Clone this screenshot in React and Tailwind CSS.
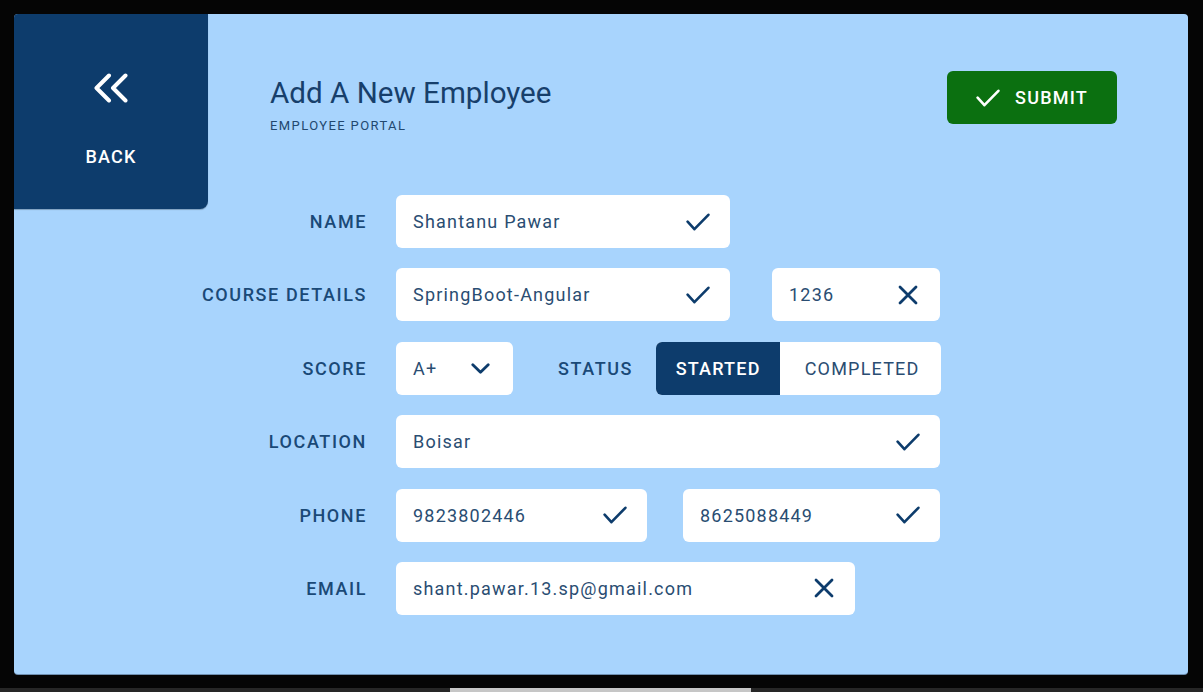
import React from 'react';

// Small inline icons, drawn to match the reference strokes
const CheckIcon = ({ className = '' }) => (
    <svg width="24" height="18" viewBox="0 0 24 18" fill="none" stroke="currentColor" strokeWidth="2.6" strokeLinecap="round" strokeLinejoin="round" className={className}>
        <path d="M1.6 8.6 8.4 16.2 22.4 1.8" />
    </svg>
);

const CrossIcon = ({ className = '' }) => (
    <svg width="20" height="20" viewBox="0 0 20 20" fill="none" stroke="currentColor" strokeWidth="2.8" strokeLinecap="round" className={className}>
        <path d="M2 2 18 18M18 2 2 18" />
    </svg>
);

const ChevronDown = () => (
    <svg width="19" height="11" viewBox="0 0 19 11" fill="none" stroke="currentColor" strokeWidth="2.8" strokeLinecap="round" strokeLinejoin="round">
        <path d="M1.8 1.8 9.5 9.2 17.2 1.8" />
    </svg>
);

const ChevronsLeft = () => (
    <svg width="36" height="30" viewBox="0 0 36 30" fill="none" stroke="currentColor" strokeWidth="4" strokeLinecap="round" strokeLinejoin="round">
        <path d="M16 2.5 3.5 15 16 27.5" />
        <path d="M32.5 2.5 20 15 32.5 27.5" />
    </svg>
);

const Label = ({ children }) => (
    <div className="w-[382px] shrink-0 pr-[29px] text-right text-[18px] font-medium tracking-[1.6px] text-[#1a4977]">
        {children}
    </div>
);

const Field = ({ value, icon, width, pr = 'pr-[20px]' }) => (
    <div className={`${width} ${pr} h-[53px] shrink-0 bg-white rounded-[6px] flex items-center justify-between pl-[17px] text-[18px] tracking-[1.2px] text-[#2a4d72]`}>
        <span>{value}</span>
        <span className="text-[#0d3c6c] flex items-center">
            {icon === 'check' ? <CheckIcon /> : <CrossIcon />}
        </span>
    </div>
);

const App = () => {
    return (
        <div className="w-[1203px] h-[692px] bg-[#050505] flex flex-col overflow-hidden font-['Roboto','Noto_Sans',sans-serif]">
            <div className="mt-[14px] ml-[14px] w-[1174px] h-[660px] bg-[#a8d4fd] rounded-[4px] shadow-[0_1px_0_#6f8fb0] flex flex-col">
                {/* Header */}
                <div className="h-[181px] flex items-start shrink-0">
                    <button className="w-[194px] h-[195px] shrink-0 bg-[#0d3c6c] rounded-tl-[4px] rounded-br-[8px] shadow-[0_1px_1px_rgba(0,0,0,0.25)] flex flex-col items-center pt-[59px] text-white">
                        <ChevronsLeft />
                        <span className="mt-[43px] text-[18px] leading-[22px] font-medium tracking-[1.2px]">BACK</span>
                    </button>

                    <div className="flex-1 pl-[62px] pt-[62px]">
                        <h1 className="text-[29.6px] leading-[34px] text-[#173f6b]">Add A New Employee</h1>
                        <p className="mt-[8px] text-[13px] leading-[16px] tracking-[1.4px] text-[#22486f]">EMPLOYEE PORTAL</p>
                    </div>

                    <button className="mt-[57px] mr-[71px] w-[170px] h-[53px] bg-[#0b7010] rounded-[6px] flex items-center justify-center gap-[15px] text-white">
                        <CheckIcon />
                        <span className="text-[18px] font-medium tracking-[1.2px]">SUBMIT</span>
                    </button>
                </div>

                {/* Form */}
                <div className="flex flex-col gap-y-[20.4px]">
                    <div className="flex items-center h-[53px]">
                        <Label>NAME</Label>
                        <Field width="w-[334px]" value="Shantanu Pawar" icon="check" />
                    </div>

                    <div className="flex items-center h-[53px]">
                        <Label>COURSE DETAILS</Label>
                        <Field width="w-[334px]" value="SpringBoot-Angular" icon="check" />
                        <div className="ml-[42px]">
                            <Field width="w-[168px]" pr="pr-[22px]" value="1236" icon="cross" />
                        </div>
                    </div>

                    <div className="flex items-center h-[53px]">
                        <Label>SCORE</Label>
                        <div className="w-[117px] h-[53px] bg-white rounded-[6px] flex items-center justify-between pl-[17px] pr-[23px] text-[18px] tracking-[1.2px] text-[#2a4d72]">
                            <span>A+</span>
                            <span className="text-[#0d3c6c]"><ChevronDown /></span>
                        </div>
                        <div className="ml-[45px] text-[18px] font-medium tracking-[1.6px] text-[#1a4977]">STATUS</div>
                        <div className="ml-[23px] w-[285px] h-[53px] rounded-[6px] overflow-hidden flex bg-white">
                            <div className="w-[124px] bg-[#0d3c6c] text-white flex items-center justify-center text-[18px] font-medium tracking-[1.2px]">STARTED</div>
                            <div className="flex-1 flex items-center justify-center pl-[3px] text-[18px] tracking-[1.2px] text-[#2a4d72]">COMPLETED</div>
                        </div>
                    </div>

                    <div className="flex items-center h-[53px]">
                        <Label>LOCATION</Label>
                        <Field width="w-[544px]" value="Boisar" icon="check" />
                    </div>

                    <div className="flex items-center h-[53px]">
                        <Label>PHONE</Label>
                        <Field width="w-[251px]" value="9823802446" icon="check" />
                        <div className="ml-[36px]">
                            <Field width="w-[257px]" value="8625088449" icon="check" />
                        </div>
                    </div>

                    <div className="flex items-center h-[53px]">
                        <Label>EMAIL</Label>
                        <Field width="w-[459px]" pr="pr-[21px]" value="shant.pawar.13.sp@gmail.com" icon="cross" />
                    </div>
                </div>
            </div>

            {/* Bottom scroll strip */}
            <div className="mt-auto h-[4px] bg-[#262626] flex">
                <div className="ml-[450px] w-[301px] bg-[#c6c6c6]" />
            </div>
        </div>
    );
};

export default App;
